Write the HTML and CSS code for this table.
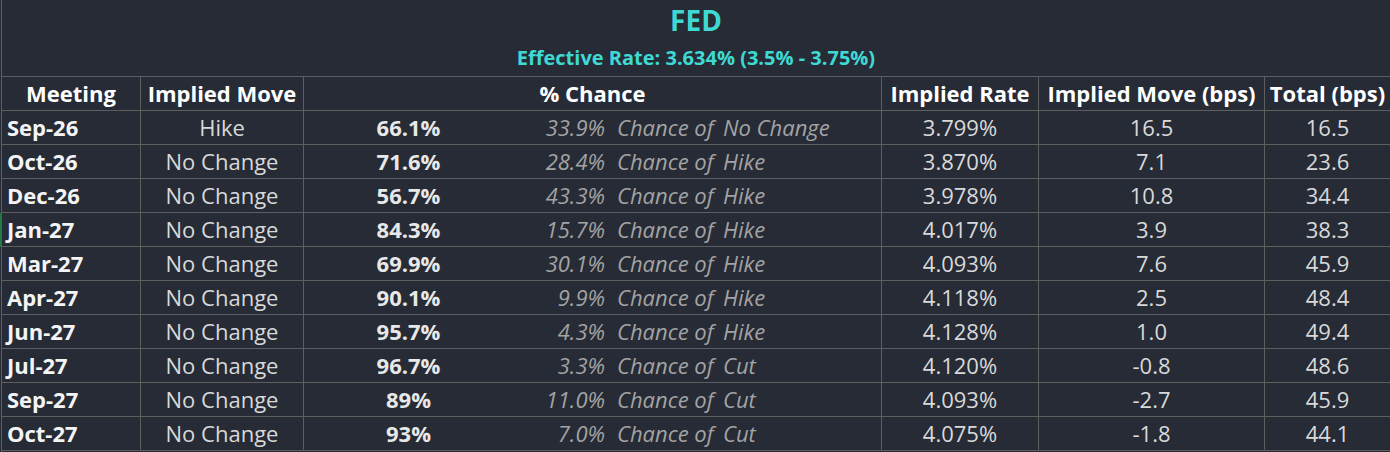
FILE: index.html
```html
<!DOCTYPE html>
<html lang="en">
<head>
<meta charset="utf-8">
<title>FED</title>
<link rel="stylesheet" href="styles.css">
</head>
<body>
<div class="sheet">
  <header class="banner">
    <div class="title">FED</div>
    <div class="subtitle">Effective Rate: 3.634% (3.5% - 3.75%)</div>
  </header>
  <div class="grid">
    <div class="row head">
      <div class="cell c1">Meeting</div>
      <div class="cell c2">Implied Move</div>
      <div class="cell c3h">% Chance</div>
      <div class="cell c4">Implied Rate</div>
      <div class="cell c5">Implied Move (bps)</div>
      <div class="cell c6">Total (bps)</div>
    </div>
    <div class="row">
      <div class="cell c1">Sep-26</div>
      <div class="cell c2">Hike</div>
      <div class="cell c3"><span class="pct">66.1%</span><span class="alt">33.9%</span><span class="of">Chance of</span><span class="mv">No Change</span></div>
      <div class="cell c4">3.799%</div>
      <div class="cell c5">16.5</div>
      <div class="cell c6">16.5</div>
    </div>
    <div class="row">
      <div class="cell c1">Oct-26</div>
      <div class="cell c2">No Change</div>
      <div class="cell c3"><span class="pct">71.6%</span><span class="alt">28.4%</span><span class="of">Chance of</span><span class="mv">Hike</span></div>
      <div class="cell c4">3.870%</div>
      <div class="cell c5">7.1</div>
      <div class="cell c6">23.6</div>
    </div>
    <div class="row">
      <div class="cell c1">Dec-26</div>
      <div class="cell c2">No Change</div>
      <div class="cell c3"><span class="pct">56.7%</span><span class="alt">43.3%</span><span class="of">Chance of</span><span class="mv">Hike</span></div>
      <div class="cell c4">3.978%</div>
      <div class="cell c5">10.8</div>
      <div class="cell c6">34.4</div>
    </div>
    <div class="row">
      <div class="cell c1 marked">Jan-27</div>
      <div class="cell c2">No Change</div>
      <div class="cell c3"><span class="pct">84.3%</span><span class="alt">15.7%</span><span class="of">Chance of</span><span class="mv">Hike</span></div>
      <div class="cell c4">4.017%</div>
      <div class="cell c5">3.9</div>
      <div class="cell c6">38.3</div>
    </div>
    <div class="row">
      <div class="cell c1">Mar-27</div>
      <div class="cell c2">No Change</div>
      <div class="cell c3"><span class="pct">69.9%</span><span class="alt">30.1%</span><span class="of">Chance of</span><span class="mv">Hike</span></div>
      <div class="cell c4">4.093%</div>
      <div class="cell c5">7.6</div>
      <div class="cell c6">45.9</div>
    </div>
    <div class="row">
      <div class="cell c1">Apr-27</div>
      <div class="cell c2">No Change</div>
      <div class="cell c3"><span class="pct">90.1%</span><span class="alt">9.9%</span><span class="of">Chance of</span><span class="mv">Hike</span></div>
      <div class="cell c4">4.118%</div>
      <div class="cell c5">2.5</div>
      <div class="cell c6">48.4</div>
    </div>
    <div class="row">
      <div class="cell c1">Jun-27</div>
      <div class="cell c2">No Change</div>
      <div class="cell c3"><span class="pct">95.7%</span><span class="alt">4.3%</span><span class="of">Chance of</span><span class="mv">Hike</span></div>
      <div class="cell c4">4.128%</div>
      <div class="cell c5">1.0</div>
      <div class="cell c6">49.4</div>
    </div>
    <div class="row">
      <div class="cell c1">Jul-27</div>
      <div class="cell c2">No Change</div>
      <div class="cell c3"><span class="pct">96.7%</span><span class="alt">3.3%</span><span class="of">Chance of</span><span class="mv">Cut</span></div>
      <div class="cell c4">4.120%</div>
      <div class="cell c5">-0.8</div>
      <div class="cell c6">48.6</div>
    </div>
    <div class="row">
      <div class="cell c1">Sep-27</div>
      <div class="cell c2">No Change</div>
      <div class="cell c3"><span class="pct">89%</span><span class="alt">11.0%</span><span class="of">Chance of</span><span class="mv">Cut</span></div>
      <div class="cell c4">4.093%</div>
      <div class="cell c5">-2.7</div>
      <div class="cell c6">45.9</div>
    </div>
    <div class="row">
      <div class="cell c1">Oct-27</div>
      <div class="cell c2">No Change</div>
      <div class="cell c3"><span class="pct">93%</span><span class="alt">7.0%</span><span class="of">Chance of</span><span class="mv">Cut</span></div>
      <div class="cell c4">4.075%</div>
      <div class="cell c5">-1.8</div>
      <div class="cell c6">44.1</div>
    </div>
  </div>
</div>
</body>
</html>
```
FILE: styles.css
```css
html, body {
  margin: 0;
  padding: 0;
  background: #262b36;
}
body {
  width: 1390px;
  height: 452px;
  overflow: hidden;
  font-family: "Open Sans", "Noto Sans", sans-serif;
  color: #d9d9d9;
}
.sheet {
  margin-left: 1px;
  border-left: 1px solid #5e5e5e;
  height: 452px;
}
.banner {
  height: 76px;
  padding-top: 1px;
  box-sizing: border-box;
  text-align: center;
  color: #3fd9d4;
  font-weight: 700;
}
.title {
  font-size: 28px;
  line-height: 38px;
}
.subtitle {
  font-size: 20px;
  line-height: 37px;
}
.grid {
  border-top: 1px solid #5e5e5e;
}
.row {
  display: grid;
  grid-template-columns: 139px 163px 578px 157px 226px 125px;
  height: 34px;
}
.cell {
  box-sizing: border-box;
  height: 34px;
  border-bottom: 1px solid #5e5e5e;
  border-right: 1px solid #5e5e5e;
  font-size: 22px;
  line-height: 33px;
  text-align: center;
  white-space: nowrap;
  position: relative;
}
.c6 { border-right: none; }
.head .cell {
  font-weight: 700;
  color: #ffffff;
}
.row:not(.head) .c1 {
  text-align: left;
  padding-left: 5px;
  font-weight: 700;
  color: #f4f4f4;
}
.marked {
  box-shadow: -2px 0 0 #1f7a45;
}
.c3 {
  display: grid;
  grid-template-columns: 209px 92px 12px 106px 1fr;
  text-align: left;
}
.pct {
  grid-column: 1;
  text-align: center;
  font-weight: 700;
  color: #e8e8e8;
}
.alt {
  grid-column: 2;
  text-align: right;
  font-style: italic;
  color: #a3a3a3;
}
.of {
  grid-column: 4;
  font-style: italic;
  color: #a3a3a3;
}
.mv {
  grid-column: 5;
  font-style: italic;
  color: #a3a3a3;
}
```
